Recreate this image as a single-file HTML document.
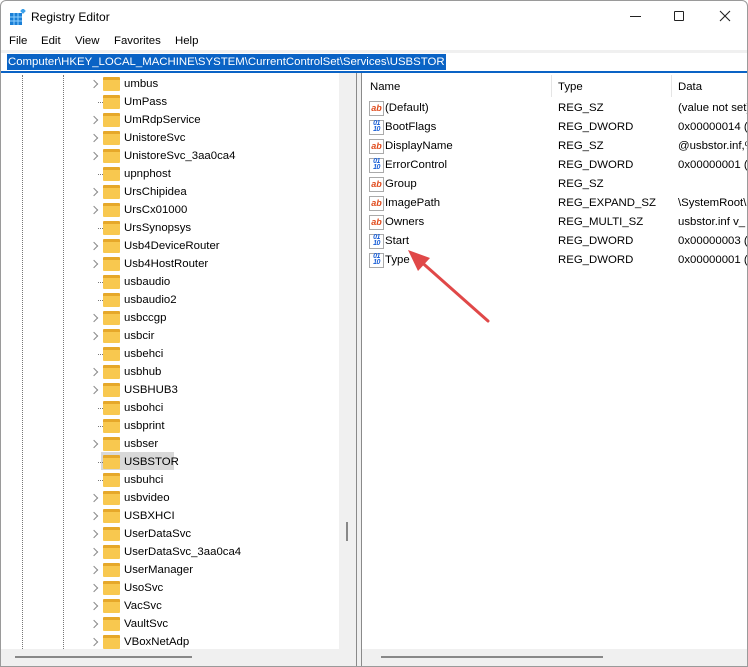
<!DOCTYPE html>
<html><head><meta charset="utf-8"><style>
*{margin:0;padding:0;box-sizing:border-box}
body{width:748px;height:667px;overflow:hidden;background:#fff;font-family:"Liberation Sans",sans-serif;font-size:11.4px;color:#000;position:relative}
.a{position:absolute}
.win{left:0;top:0;width:748px;height:667px;border:1px solid #9a9a9a;border-radius:6px 6px 0 0;background:#fff;overflow:hidden}
.row{position:absolute;left:0;height:18px;width:338px}
.row .t{position:absolute;left:123px;top:4px;white-space:nowrap}
.fold{position:absolute;left:102px;top:3px;width:17px;height:14px;background:#f8c84f;border-radius:1px;border-top:3px solid #e6a82a}
.chev{position:absolute;left:90px;top:7px;width:6px;height:6px;border-right:1.5px solid #8a8a8a;border-top:1.5px solid #8a8a8a;transform:rotate(45deg)}
.dot{position:absolute;left:97px;top:10px;width:5px;border-top:1px dotted #777}
.vl{position:absolute;top:74px;height:574px;border-left:1px dotted #777}
.r{position:absolute;left:362px;height:19px;width:386px}
.r span{position:absolute;top:3px;white-space:nowrap}
.ic{position:absolute;left:6px;top:2px;width:15px;height:15px;border:1px solid #aaa;background:#fff;font-size:9px;font-weight:bold;line-height:12px;text-align:center}
.ab{color:#e04a1b}
.bn{color:#1a5fd6;font-size:7px;line-height:6px;letter-spacing:-0.5px}
</style></head><body>
<div class="a win">
<svg class="a" style="left:9px;top:8px" width="16" height="16" viewBox="0 0 16 16">
<rect x="0" y="4" width="12" height="12" fill="#1b7fd6"/>
<g stroke="#8fd0ff" stroke-width="1"><line x1="4" y1="4" x2="4" y2="16"/><line x1="8" y1="4" x2="8" y2="16"/><line x1="0" y1="8" x2="12" y2="8"/><line x1="0" y1="12" x2="12" y2="12"/></g>
<rect x="11" y="0" width="4" height="4" fill="#3aa0ea" transform="rotate(45 13 2)"/>
</svg>
<div class="a" style="left:30px;top:9px;font-size:12px">Registry Editor</div>
<div class="a" style="left:629px;top:15px;width:11px;border-top:1px solid #222"></div>
<div class="a" style="left:673px;top:10px;width:10px;height:10px;border:1px solid #222;border-radius:1px"></div>
<svg class="a" style="left:718px;top:9px" width="12" height="12"><path d="M1 1L11 11M11 1L1 11" stroke="#222" stroke-width="1.1"/></svg>
<div class="a" style="left:8px;top:34px">File</div>
<div class="a" style="left:40px;top:34px">Edit</div>
<div class="a" style="left:74px;top:34px">View</div>
<div class="a" style="left:113px;top:34px">Favorites</div>
<div class="a" style="left:174px;top:34px">Help</div>
<div class="a" style="left:0;top:49px;width:748px;height:3px;background:#f0f0f0"></div>
<div class="a" style="left:6px;top:53px;height:16px;background:#0a63c5;color:#fff;padding:1px 1px;line-height:15px">Computer\HKEY_LOCAL_MACHINE\SYSTEM\CurrentControlSet\Services\USBSTOR</div>
<div class="a" style="left:0;top:70px;width:748px;height:2px;background:#0a63c5"></div>
<div class="vl" style="left:21px"></div>
<div class="vl" style="left:62px"></div>
<div class="row" style="top:73px"><i class="chev"></i><i class="fold"></i><span class="t">umbus</span></div>
<div class="row" style="top:91px"><i class="dot"></i><i class="fold"></i><span class="t">UmPass</span></div>
<div class="row" style="top:109px"><i class="chev"></i><i class="fold"></i><span class="t">UmRdpService</span></div>
<div class="row" style="top:127px"><i class="chev"></i><i class="fold"></i><span class="t">UnistoreSvc</span></div>
<div class="row" style="top:145px"><i class="chev"></i><i class="fold"></i><span class="t">UnistoreSvc_3aa0ca4</span></div>
<div class="row" style="top:163px"><i class="dot"></i><i class="fold"></i><span class="t">upnphost</span></div>
<div class="row" style="top:181px"><i class="chev"></i><i class="fold"></i><span class="t">UrsChipidea</span></div>
<div class="row" style="top:199px"><i class="chev"></i><i class="fold"></i><span class="t">UrsCx01000</span></div>
<div class="row" style="top:217px"><i class="dot"></i><i class="fold"></i><span class="t">UrsSynopsys</span></div>
<div class="row" style="top:235px"><i class="chev"></i><i class="fold"></i><span class="t">Usb4DeviceRouter</span></div>
<div class="row" style="top:253px"><i class="chev"></i><i class="fold"></i><span class="t">Usb4HostRouter</span></div>
<div class="row" style="top:271px"><i class="dot"></i><i class="fold"></i><span class="t">usbaudio</span></div>
<div class="row" style="top:289px"><i class="dot"></i><i class="fold"></i><span class="t">usbaudio2</span></div>
<div class="row" style="top:307px"><i class="chev"></i><i class="fold"></i><span class="t">usbccgp</span></div>
<div class="row" style="top:325px"><i class="chev"></i><i class="fold"></i><span class="t">usbcir</span></div>
<div class="row" style="top:343px"><i class="dot"></i><i class="fold"></i><span class="t">usbehci</span></div>
<div class="row" style="top:361px"><i class="chev"></i><i class="fold"></i><span class="t">usbhub</span></div>
<div class="row" style="top:379px"><i class="chev"></i><i class="fold"></i><span class="t">USBHUB3</span></div>
<div class="row" style="top:397px"><i class="dot"></i><i class="fold"></i><span class="t">usbohci</span></div>
<div class="row" style="top:415px"><i class="dot"></i><i class="fold"></i><span class="t">usbprint</span></div>
<div class="row" style="top:433px"><i class="chev"></i><i class="fold"></i><span class="t">usbser</span></div>
<div class="a" style="left:100px;top:451px;width:73px;height:18px;background:#d9d9d9"></div>
<div class="row" style="top:451px"><i class="dot"></i><i class="fold"></i><span class="t">USBSTOR</span></div>
<div class="row" style="top:469px"><i class="dot"></i><i class="fold"></i><span class="t">usbuhci</span></div>
<div class="row" style="top:487px"><i class="chev"></i><i class="fold"></i><span class="t">usbvideo</span></div>
<div class="row" style="top:505px"><i class="chev"></i><i class="fold"></i><span class="t">USBXHCI</span></div>
<div class="row" style="top:523px"><i class="chev"></i><i class="fold"></i><span class="t">UserDataSvc</span></div>
<div class="row" style="top:541px"><i class="chev"></i><i class="fold"></i><span class="t">UserDataSvc_3aa0ca4</span></div>
<div class="row" style="top:559px"><i class="chev"></i><i class="fold"></i><span class="t">UserManager</span></div>
<div class="row" style="top:577px"><i class="chev"></i><i class="fold"></i><span class="t">UsoSvc</span></div>
<div class="row" style="top:595px"><i class="chev"></i><i class="fold"></i><span class="t">VacSvc</span></div>
<div class="row" style="top:613px"><i class="chev"></i><i class="fold"></i><span class="t">VaultSvc</span></div>
<div class="row" style="top:631px"><i class="chev"></i><i class="fold"></i><span class="t">VBoxNetAdp</span></div>
<div class="a" style="left:338px;top:72px;width:17px;height:576px;background:#f0f0f0"></div>
<div class="a" style="left:345px;top:521px;width:2px;height:19px;background:#888"></div>
<div class="a" style="left:0;top:648px;width:355px;height:19px;background:#f0f0f0"></div>
<div class="a" style="left:14px;top:655px;width:177px;height:2px;background:#888"></div>
<div class="a" style="left:355px;top:72px;width:6px;height:595px;background:#f0f0f0;border-left:1px solid #8a8a8a;border-right:1px solid #8a8a8a"></div>
<div class="a" style="left:369px;top:80px">Name</div>
<div class="a" style="left:550px;top:74px;height:22px;border-left:1px solid #e5e5e5"></div>
<div class="a" style="left:557px;top:80px">Type</div>
<div class="a" style="left:670px;top:74px;height:22px;border-left:1px solid #e5e5e5"></div>
<div class="a" style="left:677px;top:80px">Data</div>
<div class="r" style="top:98px"><i class="ic ab">ab</i><span style="left:22px">(Default)</span><span style="left:195px">REG_SZ</span><span style="left:315px">(value not set)</span></div>
<div class="r" style="top:117px"><i class="ic bn">01<br>10</i><span style="left:22px">BootFlags</span><span style="left:195px">REG_DWORD</span><span style="left:315px">0x00000014 (20)</span></div>
<div class="r" style="top:136px"><i class="ic ab">ab</i><span style="left:22px">DisplayName</span><span style="left:195px">REG_SZ</span><span style="left:315px">@usbstor.inf,%</span></div>
<div class="r" style="top:155px"><i class="ic bn">01<br>10</i><span style="left:22px">ErrorControl</span><span style="left:195px">REG_DWORD</span><span style="left:315px">0x00000001 (1)</span></div>
<div class="r" style="top:174px"><i class="ic ab">ab</i><span style="left:22px">Group</span><span style="left:195px">REG_SZ</span></div>
<div class="r" style="top:193px"><i class="ic ab">ab</i><span style="left:22px">ImagePath</span><span style="left:195px">REG_EXPAND_SZ</span><span style="left:315px">\SystemRoot\Sys</span></div>
<div class="r" style="top:212px"><i class="ic ab">ab</i><span style="left:22px">Owners</span><span style="left:195px">REG_MULTI_SZ</span><span style="left:315px">usbstor.inf v_</span></div>
<div class="r" style="top:231px"><i class="ic bn">01<br>10</i><span style="left:22px">Start</span><span style="left:195px">REG_DWORD</span><span style="left:315px">0x00000003 (3)</span></div>
<div class="r" style="top:250px"><i class="ic bn">01<br>10</i><span style="left:22px">Type</span><span style="left:195px">REG_DWORD</span><span style="left:315px">0x00000001 (1)</span></div>
<div class="a" style="left:361px;top:648px;width:387px;height:19px;background:#f0f0f0"></div>
<div class="a" style="left:380px;top:655px;width:222px;height:2px;background:#888"></div>
<svg class="a" style="left:395px;top:240px" width="100" height="90"><line x1="92" y1="80" x2="22" y2="18" stroke="#e04848" stroke-width="3" stroke-linecap="round"/><polygon points="12,9 34,17 22,30" fill="#e04848"/></svg>
</div>
</body></html>
